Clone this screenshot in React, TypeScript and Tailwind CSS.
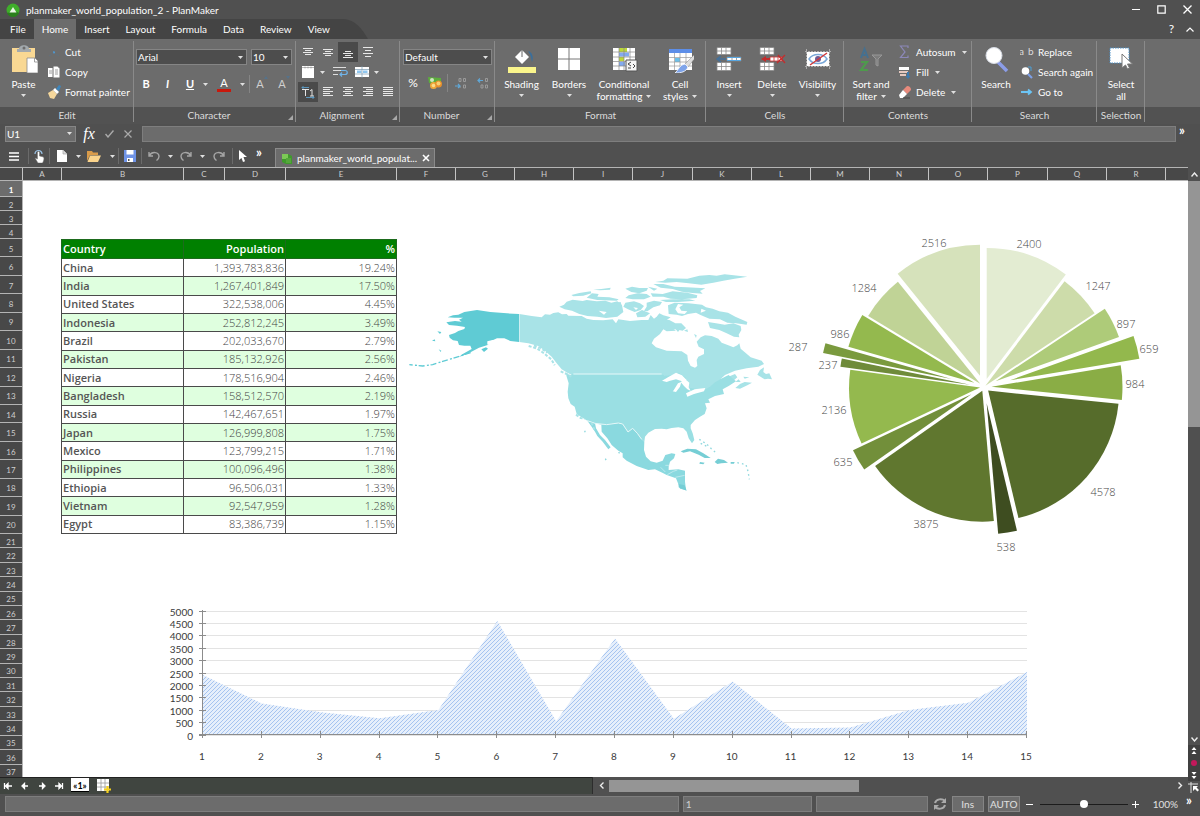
import React, { useState } from 'react';
import clsx from 'clsx';

const tabs = ['File', 'Home', 'Insert', 'Layout', 'Formula', 'Data', 'Review', 'View'];

const columns: { name: string; width: string }[] = [
  { name: 'A', width: 'w-[39px]' },
  { name: 'B', width: 'w-[122px]' },
  { name: 'C', width: 'w-[41px]' },
  { name: 'D', width: 'w-[61px]' },
  { name: 'E', width: 'w-[111px]' },
  ...'FGHI'.split('').map((name) => ({ name, width: 'w-[59px]' })),
  { name: 'J', width: 'w-[60px]' },
  ...'KLMNO'.split('').map((name) => ({ name, width: 'w-[59px]' })),
  { name: 'P', width: 'w-[60px]' },
  ...'QR'.split('').map((name) => ({ name, width: 'w-[59px]' })),
];

const countries = [
  ['China', '1,393,783,836', '19.24%'],
  ['India', '1,267,401,849', '17.50%'],
  ['United States', '322,538,006', '4.45%'],
  ['Indonesia', '252,812,245', '3.49%'],
  ['Brazil', '202,033,670', '2.79%'],
  ['Pakistan', '185,132,926', '2.56%'],
  ['Nigeria', '178,516,904', '2.46%'],
  ['Bangladesh', '158,512,570', '2.19%'],
  ['Russia', '142,467,651', '1.97%'],
  ['Japan', '126,999,808', '1.75%'],
  ['Mexico', '123,799,215', '1.71%'],
  ['Philippines', '100,096,496', '1.38%'],
  ['Ethiopia', '96,506,031', '1.33%'],
  ['Vietnam', '92,547,959', '1.28%'],
  ['Egypt', '83,386,739', '1.15%'],
];

// value, colour, how far the slice is pulled out, label position
const slices: [number, string, number, number, number][] = [
  [2400, '#e3ecd2', 8.5, 249, 23],
  [1247, '#cddcaa', 2, 318, 65],
  [897, '#aecb79', 13, 346, 103],
  [659, '#93b84d', 27, 369, 128],
  [984, '#8aad45', 7.5, 355, 163],
  [4578, '#566c2b', 5.5, 323, 271],
  [538, '#3e4d20', 16.5, 226, 326],
  [3875, '#60772f', 4, 146, 303],
  [635, '#728f3a', 14.5, 63, 241],
  [2136, '#94b94e', 4, 54, 189],
  [237, '#6f8b3a', 14, 48, 144],
  [287, '#7a9a3e', 33.5, 18, 126],
  [986, '#94b94e', 10.5, 60, 113],
  [1284, '#c0d396', 5, 84, 67],
  [2516, '#d6e2bb', 12, 154, 22],
];

const Caret = ({ className = '' }: { className?: string }) => (
  <svg className={clsx('shrink-0', className)} width="5" height="3" viewBox="0 0 5 3">
    <path d="M0 0h5L2.5 3z" fill="#e0e0e0" />
  </svg>
);

const Separator = () => <span className="h-4 w-px shrink-0 bg-[#6b6b6b]" />;

/* ---------- ribbon building blocks ---------- */

const Group: React.FC<{ label: string; width: string; launcher?: boolean; children: React.ReactNode }> = ({
  label,
  width,
  launcher,
  children,
}) => (
  <section className={clsx('relative flex shrink-0 flex-col', width)}>
    <div className="flex h-[68px] items-start">{children}</div>
    <h2 className={clsx('h-[17px] bg-[#525252] text-center leading-4 text-[#dcdcdc]', launcher && 'pr-3')}>{label}</h2>
    {launcher && (
      <svg className="absolute right-[3px] bottom-1" width="5" height="5" viewBox="0 0 5 5">
        <path d="M5 0v5H0z" fill="#a8a8a8" />
      </svg>
    )}
    <span className="absolute top-0.5 right-0 h-[81px] w-px bg-[#8a8a8a]" />
  </section>
);

const BigButton: React.FC<{
  lines: string[];
  width: string;
  caret?: 'below' | 'inline';
  children: React.ReactNode;
}> = ({ lines, width, caret, children }) => (
  <button type="button" className={clsx('flex shrink-0 flex-col items-center pt-1.5 leading-3 text-white', width)}>
    <svg width="28" height="28" viewBox="0 0 28 28" className="mb-[5px]">
      {children}
    </svg>
    {lines.map((line, i) => (
      <span key={line} className="flex items-center gap-1 whitespace-nowrap">
        {line}
        {caret === 'inline' && i === lines.length - 1 && <Caret />}
      </span>
    ))}
    {caret === 'below' && <Caret className="mt-1" />}
  </button>
);

const SmallButton: React.FC<{ label: string; caret?: boolean; children: React.ReactNode }> = ({
  label,
  caret,
  children,
}) => (
  <button type="button" className="flex h-5 items-center whitespace-nowrap text-white">
    <svg width="14" height="14" viewBox="0 0 14 14" className="mr-1">
      {children}
    </svg>
    {label}
    {caret && <Caret className="ml-1.5" />}
  </button>
);

const Tool: React.FC<{
  label: string;
  width?: string;
  pressed?: boolean;
  children: React.ReactNode;
}> = ({ label, width = 'w-5', pressed, children }) => (
  <button
    type="button"
    aria-label={label}
    className={clsx('flex h-5 shrink-0 items-center justify-center text-white', width, pressed && 'bg-[#4a4a4a]')}
  >
    {children}
  </button>
);

const Select: React.FC<{ label: string; value: string; width: string; className?: string }> = ({
  label,
  value,
  width,
  className = 'bg-[#4d4d4d]',
}) => (
  <span className={clsx('relative flex h-4 items-center', width)}>
    <select
      aria-label={label}
      className={clsx('h-4 w-full appearance-none border border-[#858585] pl-px leading-3 text-white', className)}
    >
      <option>{value}</option>
    </select>
    <Caret className="pointer-events-none absolute right-1" />
  </span>
);

const Lines = ({ d, color = '#e8e8e8' }: { d: string; color?: string }) => (
  <svg width="12" height="12" viewBox="0 0 12 12" stroke={color} fill="none">
    <path d={d} />
  </svg>
);

const Ribbon = () => (
  <div className="flex h-[85px] overflow-hidden bg-[#6c6c6c]">
    <Group label="Edit" width="w-[134px]">
      <BigButton lines={['Paste']} width="w-[47px]" caret="below">
        <path d="M2 3h23v24H2z" fill="#f9d893" />
        <path d="M9 4c0-5 10-5 10 0h2v3H7V4z" fill="#a3a9ad" />
        <circle cx="14" cy="3" r="1.500" fill="#6c6c6c" />
        <path d="M17 13h8l3 3v12H17z" fill="#fff" stroke="#8b8b8b" strokeWidth=".8" />
        <path d="M24.500 13v4H28" fill="none" stroke="#8b8b8b" strokeWidth=".8" />
      </BigButton>
      <div className="flex flex-col pt-[3px]">
        <SmallButton label="Cut">
          <path d="M6 7l2 .5M7 6.500v2" stroke="#4c9bd8" strokeWidth="1.200" />
          <path d="M2 11l3-2M12 11l-3-2" stroke="#61707c" />
        </SmallButton>
        <SmallButton label="Copy">
          <path d="M1 3h6v9H1z" fill="#fff" />
          <path d="M6 1h4.500L13 3.500V13H6z" fill="#fff" stroke="#6c6c6c" />
          <path d="M2 6h3M2 8h3M8 5h3M8 7h3M8 9h3" stroke="#888" strokeWidth=".8" />
        </SmallButton>
        <SmallButton label="Format painter">
          <path d="M1 8l5-3 4 4-3 5-4-1z" fill="#f5d79b" />
          <path d="M6 5l2-2 4 4-2 2z" fill="#fff" />
          <path d="M9 4l3-4 2 1-2 5z" fill="#3e86bd" />
        </SmallButton>
      </div>
    </Group>

    <Group label="Character" width="w-[162px]" launcher>
      <div className="flex flex-col gap-[9px] pt-2.5 pl-0.5">
        <div className="flex gap-1">
          <Select label="Font" value="Arial" width="w-[111px]" />
          <Select label="Font size" value="10" width="w-[41px]" />
        </div>
        <div className="flex items-center">
          <Tool label="Bold">
            <b className="text-[11px]">B</b>
          </Tool>
          <Tool label="Italic" width="w-[23px]">
            <b className="text-[11px] italic">I</b>
          </Tool>
          <Tool label="Underline" width="w-[22px]">
            <b className="text-[11px] underline">U</b>
          </Tool>
          <Tool label="Underline styles" width="w-2">
            <Caret />
          </Tool>
          <Tool label="Font color" width="w-[30px]">
            <span className="w-3.5 border-b-3 border-[#c8180c] text-[11px] leading-3">A</span>
          </Tool>
          <Tool label="More font colors" width="w-1.5">
            <Caret />
          </Tool>
          <span className="mx-1 h-[18px] w-px bg-[#858585]" />
          <Tool label="Grow font" width="w-4">
            <span className="text-[11px] text-[#d0d0d0]">A</span>
            <svg width="4" height="6" viewBox="0 0 4 6" className="self-start">
              <path d="M0 5l2-3 2 3z" fill="#55728a" />
            </svg>
          </Tool>
          <Tool label="Shrink font" width="w-7">
            <span className="text-[11px] text-[#d0d0d0]">A</span>
            <svg width="4" height="6" viewBox="0 0 4 6" className="self-start">
              <path d="M0 2l2 3 2-3z" fill="#55728a" />
            </svg>
          </Tool>
        </div>
      </div>
    </Group>

    <Group label="Alignment" width="w-[104px]" launcher>
      <div className="flex flex-col pt-[3px] pl-0.5">
        <div className="flex">
          <Tool label="Align top">
            <Lines d="M1 2.500h10M3 4.500h6M1 6.500h10M3 8.500h6" />
          </Tool>
          <Tool label="Align middle">
            <Lines d="M1 3.500h10M3 5.500h6M1 7.500h10M3 9.500h6" />
          </Tool>
          <Tool label="Align bottom" pressed>
            <Lines d="M3 5.500h6M1 7.500h10M3 9.500h6M1 11.500h10" />
          </Tool>
          <Tool label="Distribute vertically">
            <Lines d="M1 1.500h10M3 4.500h6M1 7.500h10M3 10.500h6" />
          </Tool>
        </div>
        <div className="flex">
          <Tool label="Cell borders">
            <svg width="14" height="12" viewBox="0 0 14 12">
              <path d="M1 0h12v12H1z" fill="#fff" />
              <path d="M1 1.500h12M4 .5v2M7 .5v2M10 .5v2" stroke="#888" strokeWidth=".6" />
            </svg>
          </Tool>
          <Tool label="More borders" width="w-2">
            <Caret />
          </Tool>
          <Tool label="Wrap text" width="w-7">
            <svg width="16" height="12" viewBox="0 0 16 12" fill="none">
              <path d="M1 1.500h13M1 4.500h8M1 8.500h5" stroke="#ddd" />
              <path d="M9 4.500h4c3 0 3 4 0 4H8m2-2l-2 2 2 2" stroke="#6fb4ea" strokeWidth="1.200" />
            </svg>
          </Tool>
          <Tool label="Merge cells" width="w-4">
            <svg width="14" height="12" viewBox="0 0 14 12" className="shrink-0">
              <path d="M0 1h14v10H0z" fill="#fff" />
              <path d="M2 4.500h4.500v2.500H2zM8 4.500h4.500v2.500H8z" fill="#8fc6ef" />
              <path d="M0 3.500h14M0 8h14M7 0v12" stroke="#7d9cb3" strokeWidth=".7" />
            </svg>
          </Tool>
          <Tool label="More merge options" width="w-3">
            <Caret />
          </Tool>
        </div>
        <div className="flex">
          <Tool label="General alignment" pressed>
            <svg width="14" height="13" viewBox="0 0 14 13" fill="none">
              <path d="M1 3.500h7M4.500 3.500V10M9 5l2-1.500V10M9 10h4" stroke="#e4e4e4" />
              <path d="M1 1.500h7M2.500 0L1 1.500 2.500 3M5 11.500h8M11.500 10l1.500 1.500-1.500 1.500" stroke="#5fa8d8" strokeWidth=".8" />
            </svg>
          </Tool>
          <Tool label="Align left">
            <Lines d="M1 1.500h10M1 3.500h7M1 5.500h10M1 7.500h7M1 9.500h10" />
          </Tool>
          <Tool label="Center">
            <Lines d="M1 1.500h10M3 3.500h6M1 5.500h10M3 7.500h6M1 9.500h10" />
          </Tool>
          <Tool label="Align right">
            <Lines d="M1 1.500h10M4 3.500h7M1 5.500h10M4 7.500h7M1 9.500h10" />
          </Tool>
          <Tool label="Justify">
            <Lines d="M1 1.500h10M1 3.500h10M1 5.500h10M1 7.500h10M1 9.500h10" />
          </Tool>
        </div>
      </div>
    </Group>

    <Group label="Number" width="w-[95px]" launcher>
      <div className="flex flex-col gap-2 pt-2.5 pl-[3px]">
        <Select label="Number format" value="Default" width="w-[89px]" />
        <div className="flex items-center">
          <Tool label="Percent">
            <span className="text-xs">%</span>
          </Tool>
          <Tool label="Currency" width="w-6">
            <svg width="16" height="14" viewBox="0 0 16 14">
              <path d="M1 1l13 1v6L2 7z" fill="#5cae3c" />
              <circle cx="5" cy="4" r="2" fill="#cfe8c0" />
              <circle cx="6.500" cy="9.500" r="3.500" fill="#f0a93a" />
              <circle cx="11.500" cy="8" r="3.500" fill="#e8902c" />
              <circle cx="11.500" cy="7.500" r="2" fill="#f8cf72" />
              <circle cx="6.500" cy="9.500" r="1.800" fill="#fbdc8c" />
            </svg>
          </Tool>
          <span className="h-[18px] w-px bg-[#858585]" />
          <Tool label="Fewer decimals" width="w-6">
            <svg width="13" height="13" viewBox="0 0 13 13" fill="none">
              <path d="M5 1.500h2v3H5zM9.500 1.500h2v3h-2zM9.500 8h2v3h-2zM6 11V9" stroke="#9a9a9a" />
              <path d="M1 9h5M4 7l2 2-2 2" stroke="#5fa8d8" strokeWidth="1.200" />
            </svg>
          </Tool>
          <Tool label="More decimals">
            <svg width="13" height="13" viewBox="0 0 13 13" fill="none">
              <path d="M9.500 1.500h2v3h-2zM5 8h2v3H5zM9.500 8h2v3h-2z" stroke="#9a9a9a" />
              <path d="M7 3.500H2M4 1.500l-2 2 2 2" stroke="#5fa8d8" strokeWidth="1.200" />
            </svg>
          </Tool>
        </div>
      </div>
    </Group>

    <Group label="Format" width="w-[211px]">
      <BigButton lines={['Shading']} width="w-[53px]" caret="below">
        <path d="M14 5l7 7-7 7-7-7z" fill="#fff" />
        <path d="M14 5v7" stroke="#666" />
        <path d="M20 6c4 1 6 6 4 11-1-4-1-7-4-11z" fill="#3a6f9c" />
        <path d="M0 22h28v6H0z" fill="#faf58c" />
      </BigButton>
      <BigButton lines={['Borders']} width="w-[42px]" caret="below">
        <path d="M3 3h22v22H3z" fill="#fff" />
        <path d="M14 3v22M3 14h22" stroke="#777" />
      </BigButton>
      <BigButton lines={['Conditional', 'formatting']} width="w-[68px]" caret="inline">
        <path d="M3 3h22v22H3z" fill="#fff" />
        <path d="M9 3h8v4H9zM9 12h5v4H9z" fill="#bcd838" />
        <path d="M9 7.500h10v4H9zM9 17h6v4H9z" fill="#82aaf0" />
        <path d="M3 7h22M3 12h22M3 16.500h22M3 21h22M9 3v22M14 3v22M20 3v22" stroke="#888" strokeWidth=".7" />
        <path d="M16 15h11v11H16z" fill="#f4f4f4" stroke="#555" />
        <path d="M21 17l-3 2 3 2M18 23h3M23 19l2 2-2 2" fill="none" stroke="#444" />
      </BigButton>
      <BigButton lines={['Cell', 'styles']} width="w-[44px]" caret="inline">
        <path d="M3 4h23v21H3z" fill="#fff" />
        <path d="M3 4h23v4H3z" fill="#5d8ee8" />
        <path d="M9 13h5v4H9z" fill="#6cc0ea" />
        <path d="M3 12.500h23M3 17h23M3 21h23M8.500 8v17M14 8v17M20 8v17" stroke="#999" strokeWidth=".7" />
        <path d="M28 10l1 3-7 9-3-3z" fill="#ddd" stroke="#888" strokeWidth=".5" />
        <path d="M19 19l3 3c-2 5-7 6-13 6 3-2 4-8 10-9z" fill="#7ea4ea" stroke="#fff" strokeWidth=".8" />
      </BigButton>
    </Group>

    <Group label="Cells" width="w-[138px]">
      <BigButton lines={['Insert']} width="w-[46px]" caret="below">
        <g fill="#fff" stroke="#8a8a8a" strokeWidth=".8">
          <path d="M2 2.500h14v7H2zM2 6h14M6.500 2.500v7M11 2.500v7" />
          <path d="M2 17.500h14v8H2zM2 21.500h14M6.500 17.500v8M11 17.500v8" />
          <path d="M12 12h14v4H12zM17 12v4M21.500 12v4" />
        </g>
        <path d="M2 14h9M6 11l-4 3 4 3" fill="none" stroke="#44709a" strokeWidth="1.500" />
        <path d="M12 12.500h14M12 15.500h14" stroke="#58a6e0" />
      </BigButton>
      <BigButton lines={['Delete']} width="w-10" caret="below">
        <g fill="#fff" stroke="#8a8a8a" strokeWidth=".8">
          <path d="M2 2.500h14v7H2zM2 6h14M6.500 2.500v7M11 2.500v7" />
          <path d="M2 17.500h14v8H2zM2 21.500h14M6.500 17.500v8M11 17.500v8" />
          <path d="M12 12h12v4H12zM16 12v4M20 12v4" stroke="#d03030" />
        </g>
        <path d="M3 14l5-3v2h4v2H8v2z" fill="#c42c2c" />
        <path d="M20 10l7 8M27 10l-8 8" stroke="#c42c2c" strokeWidth="1.300" />
      </BigButton>
      <BigButton lines={['Visibility']} width="w-[51px]" caret="below">
        <path d="M3 7h22v14H3z" fill="#fff" />
        <path d="M1 6.500h26M1 21.500h26M2.500 4v20M25.500 4v20" stroke="#aaa" strokeDasharray="2 1" />
        <path d="M5 14c4-6 14-6 18 0-4 6-14 6-18 0z" fill="#fff" stroke="#7aa8d8" strokeWidth="1.500" />
        <circle cx="14" cy="14" r="3" fill="#6f5c96" />
        <path d="M6 20L23 8" stroke="#d23a3a" strokeWidth="1.500" />
      </BigButton>
    </Group>

    <Group label="Contents" width="w-[128px]">
      <BigButton lines={['Sort and', 'filter']} width="w-[54px]" caret="inline">
        <path d="M4 13L7.500 4l3.500 9M5.500 10h4" fill="none" stroke="#46708f" strokeWidth="2" />
        <path d="M4 17h6l-6 8h7" fill="none" stroke="#4e9a4c" strokeWidth="2.200" />
        <path d="M15 10h10l-4 4v7l-2-1v-6z" fill="#7c7c7c" stroke="#989898" />
      </BigButton>
      <div className="flex flex-col pt-[3px]">
        <SmallButton label="Autosum" caret>
          <path d="M10 3V1H2.500L7 7l-4.500 5.500H10v-2" fill="none" stroke="#8c88b8" strokeWidth="1.200" />
        </SmallButton>
        <SmallButton label="Fill" caret>
          <path d="M1 2h10v3H1z" fill="#fff" />
          <path d="M1 6h9v2H1zM2 9h6v2H2z" fill="#e5c9c0" />
          <path d="M9 7h2v4h1.500L10 14l-2.500-3H9z" fill="#3c7ab0" />
        </SmallButton>
        <SmallButton label="Delete" caret>
          <path d="M5 5l4-4c3 0 4 2 4 4L9 9z" fill="#e88a7c" />
          <path d="M1 10l4-5 4 4-4 4H2z" fill="#fff" />
          <path d="M5 13h7" stroke="#444" />
        </SmallButton>
      </div>
    </Group>

    <Group label="Search" width="w-[125px]">
      <BigButton lines={['Search']} width="w-[48px]">
        <path d="M16 17l9 9" stroke="#8b9de8" strokeWidth="3.500" />
        <circle cx="12" cy="10.500" r="8" fill="#fff" stroke="#d8dde6" />
      </BigButton>
      <div className="flex flex-col pt-[3px]">
        <SmallButton label="Replace">
          <text x="-1" y="10" fontSize="10" fill="#ddd">a</text>
          <text x="8" y="10" fontSize="10" fill="#ddd">b</text>
        </SmallButton>
        <SmallButton label="Search again">
          <circle cx="5.500" cy="6" r="3.800" fill="#fff" />
          <path d="M8 9l4 4" stroke="#7ea0e8" strokeWidth="2.200" />
          <path d="M8 2h3v4" fill="none" stroke="#4aa0d8" />
        </SmallButton>
        <SmallButton label="Go to">
          <path d="M1 7h10M8 4.500L11 7 8 9.500" fill="none" stroke="#6cc4f4" strokeWidth="1.800" />
        </SmallButton>
      </div>
    </Group>

    <Group label="Selection" width="w-[48px]">
      <BigButton lines={['Select', 'all']} width="w-[48px]">
        <path d="M3 3h19v15H3z" fill="#fff" stroke="#4a90c8" strokeDasharray="1.500 1" />
        <path d="M15 9v14l3.500-3 2 4 2-1-2-4h5z" fill="#fff" stroke="#777" />
      </BigButton>
    </Group>
    <div className="flex flex-1 flex-col">
      <div className="h-[68px]" />
      <div className="h-[17px] bg-[#525252]" />
    </div>
  </div>
);

/* ---------- window chrome above the sheet ---------- */

const TitleBar = () => (
  <header className="flex h-[19px] items-center justify-between pr-2 pl-1.5">
    <div className="flex items-center gap-1.5">
      <svg width="14" height="14" viewBox="0 0 14 14">
        <circle cx="7" cy="7" r="6.500" fill="#3fae2a" />
        <path d="M1 10a6.500 6.500 0 0 0 12 0L9 8z" fill="#2a7f1c" />
        <path d="M3.500 9.500L7 4l3.500 5.500z" fill="#e9f6e4" />
      </svg>
      <h1 className="text-white">planmaker_world_population_2 - PlanMaker</h1>
    </div>
    <div className="flex items-center gap-[17px]">
      <button type="button" aria-label="Minimize">
        <svg width="8" height="9" viewBox="0 0 8 9">
          <path d="M0 4.500h8" stroke="#fff" />
        </svg>
      </button>
      <button type="button" aria-label="Maximize">
        <svg width="9" height="9" viewBox="0 0 9 9">
          <path d="M.8.8h7.400v7.400H.8z" fill="none" stroke="#fff" strokeWidth="1.200" />
        </svg>
      </button>
      <button type="button" aria-label="Close">
        <svg width="9" height="9" viewBox="0 0 9 9">
          <path d="M.5.5l8 8M8.500.5l-8 8" stroke="#fff" strokeWidth="1.300" />
        </svg>
      </button>
    </div>
  </header>
);

const MenuTabs = () => {
  const [active, setActive] = useState('Home');
  return (
    <nav className="flex h-5 items-stretch justify-between">
      <div className="flex">
        <div className="flex bg-[#444444]">
          {tabs.map((tab) => (
            <button
              key={tab}
              type="button"
              onClick={() => setActive(tab)}
              className={clsx('px-2 text-white first:pl-2.5', active === tab && 'bg-[#6c6c6c]')}
            >
              {tab}
            </button>
          ))}
        </div>
        <svg width="32" height="20" viewBox="0 0 32 20">
          <path d="M0 0h6c12 1 18 10 24 20H0z" fill="#444" />
        </svg>
      </div>
      <div className="flex items-center gap-3 pr-1.5">
        <button type="button" className="text-xs text-white">
          ?
        </button>
        <button type="button" aria-label="Collapse ribbon">
          <svg width="8" height="5" viewBox="0 0 8 5">
            <path d="M.5 4.500L4 1l3.500 3.500" fill="none" stroke="#fff" strokeWidth="1.200" />
          </svg>
        </button>
      </div>
    </nav>
  );
};

const FormulaBar = () => (
  <div className="flex h-[19px] items-center pl-[5px]">
    <Select label="Cell address" value="U1" width="w-[71px]" className="bg-[#6c6c6c]" />
    <button type="button" aria-label="Insert function" className="w-[26px] font-['Liberation_Serif',serif] text-base leading-4 text-white italic">
      fx
    </button>
    <button type="button" aria-label="Accept" className="flex w-3.5 justify-center">
      <svg width="9" height="8" viewBox="0 0 9 8">
        <path d="M.5 4L3 7l5.500-6.500" fill="none" stroke="#aaa" strokeWidth="1.400" />
      </svg>
    </button>
    <button type="button" aria-label="Cancel" className="mr-2.5 ml-2 flex w-2 justify-center">
      <svg width="8" height="8" viewBox="0 0 8 8">
        <path d="M.5.5l7 7M7.500.5l-7 7" stroke="#aaa" strokeWidth="1.200" />
      </svg>
    </button>
    <input aria-label="Formula" className="h-4 min-w-0 flex-1 border border-[#7e7e7e] bg-[#6c6c6c] text-white" />
    <button type="button" className="w-6 self-start pr-3 text-center text-[13px] leading-3 font-bold text-white">
      »
    </button>
  </div>
);

const QuickBar = () => (
  <div className="flex h-6 items-end">
    <div className="flex items-center pb-px">
      <Tool label="Menu" width="w-7">
        <svg width="10" height="9" viewBox="0 0 10 9">
          <path d="M0 1h10M0 4.500h10M0 8h10" stroke="#fff" strokeWidth="1.600" />
        </svg>
      </Tool>
      <Separator />
      <Tool label="Touch mode">
        <svg width="12" height="14" viewBox="0 0 12 14">
          <path d="M2 5a3.500 3.500 0 1 1 7 0" fill="none" stroke="#9cc4e8" strokeWidth="1.200" />
          <path d="M4.500 3.500c0-1.500 2-1.500 2 0V7l4 1c1 2 0 4-1 6H5L2 9l2.500 1z" fill="#fff" stroke="#777" strokeWidth=".5" />
        </svg>
      </Tool>
      <Separator />
      <Tool label="New" width="w-6">
        <svg width="10" height="12" viewBox="0 0 10 12">
          <path d="M0 0h6l4 4v8H0z" fill="#fff" />
          <path d="M6 0v4h4" fill="#ddd" stroke="#999" strokeWidth=".6" />
        </svg>
      </Tool>
      <Tool label="New from template" width="w-2">
        <Caret />
      </Tool>
      <Tool label="Open" width="w-6">
        <svg width="14" height="11" viewBox="0 0 14 11">
          <path d="M0 0h5l1 1.500h5V4H3L0 10z" fill="#d99b4a" />
          <path d="M3 4.500h11L11 11H.5z" fill="#fbd48c" />
        </svg>
      </Tool>
      <Tool label="Recent files" width="w-3">
        <Caret />
      </Tool>
      <Separator />
      <Tool label="Save" width="w-[22px]">
        <svg width="12" height="12" viewBox="0 0 12 12">
          <path d="M0 0h12v12H0z" fill="#6f93e6" />
          <path d="M2.500 0h7v4.500h-7zM3 8h6v4H3z" fill="#fff" />
          <path d="M4 9h1.500v2H4z" fill="#555" />
        </svg>
      </Tool>
      <Separator />
      <Tool label="Undo" width="w-6">
        <svg width="12" height="10" viewBox="0 0 12 10" fill="none" stroke="#a5a5a5" strokeWidth="1.400">
          <path d="M1 1v4h4M1.500 4.500C4 0 11 1 11 5.500c0 2-1 3-2.500 4" />
        </svg>
      </Tool>
      <Tool label="Undo history" width="w-2">
        <Caret />
      </Tool>
      <Tool label="Redo" width="w-6">
        <svg width="12" height="10" viewBox="0 0 12 10" fill="none" stroke="#a5a5a5" strokeWidth="1.400">
          <path d="M11 1v4H7M10.500 4.500C8 0 1 1 1 5.500c0 2 1 3 2.500 4" />
        </svg>
      </Tool>
      <Tool label="Redo history" width="w-2">
        <Caret />
      </Tool>
      <Tool label="Repeat" width="w-[26px]">
        <svg width="12" height="10" viewBox="0 0 12 10" fill="none" stroke="#a5a5a5" strokeWidth="1.400">
          <path d="M11 1v4H7M10.500 4.500C8 0 1 1 1 5.500c0 2 1 3 2.500 4" />
        </svg>
      </Tool>
      <Separator />
      <Tool label="Object mode">
        <svg width="8" height="12" viewBox="0 0 8 12">
          <path d="M0 0v10l2.500-2 1.500 4 2-.8L4.500 7H8z" fill="#fff" />
        </svg>
      </Tool>
      <Tool label="More tools" width="w-3">
        <span className="self-start text-[13px] leading-3 font-bold">»</span>
      </Tool>
    </div>
    <div className="ml-2.5 flex h-[19px] w-40 items-center gap-[5px] border border-b-0 border-[#8a8a8a] bg-[#6c6c6c] px-1.5 text-white">
      <svg width="10" height="11" viewBox="0 0 10 11" className="shrink-0">
        <path d="M0 1h6l4 2v8H4L0 9z" fill="#3f9a2c" />
        <path d="M0 1h6v5H0z" fill="#7cc956" />
        <path d="M4 5h5v5H4z" fill="#55a63c" />
      </svg>
      <span className="flex-1 whitespace-nowrap">planmaker_world_populat...</span>
      <button type="button" aria-label="Close document">
        <svg width="8" height="8" viewBox="0 0 8 8">
          <path d="M1 1l6 6M7 1L1 7" stroke="#fff" strokeWidth="1.600" />
        </svg>
      </button>
    </div>
  </div>
);

/* ---------- sheet contents ---------- */

const PopulationTable = () => (
  <table className="mt-[58px] h-[295px] w-[335px] shrink-0 table-fixed border-collapse text-[11px] leading-[14px]">
    <colgroup>
      <col className="w-[122px]" />
      <col className="w-[102px]" />
      <col className="w-[111px]" />
    </colgroup>
    <thead>
      <tr className="h-[19px] bg-[#008000] text-white">
        <th className="border border-[#1d6b1d] px-px py-0 text-left font-semibold">Country</th>
        <th className="border border-[#1d6b1d] px-px py-0 text-right font-semibold">Population</th>
        <th className="border border-[#1d6b1d] px-px py-0 text-right font-semibold">%</th>
      </tr>
    </thead>
    <tbody>
      {countries.map(([name, population, share], i) => (
        <tr key={name} className={i % 2 ? 'bg-[#dfffdf]' : 'bg-white'}>
          <td className="border border-[#4a4a4a] px-px py-0 font-semibold text-[#555555]">{name}</td>
          <td className="border border-[#4a4a4a] px-px py-0 text-right font-light text-[#444444]">{population}</td>
          <td className="border border-[#4a4a4a] px-px py-0 text-right font-light text-[#444444]">{share}</td>
        </tr>
      ))}
    </tbody>
  </table>
);

const NorthAmerica = () => (
  <svg className="mt-[79px] shrink-0" width="380" height="240" viewBox="0 0 1140 720">
    {/* Canada */}
    <path
      fill="#a8e3e7"
      d="M358 162L395 168 425 172 435 163 450 164 460 159 475 157 486 163 500 162 505 167 545 168 560 176 580 180 610 181 638 178 648 190 655 178 690 183 725 180 745 180 752 165 762 176 770 170 778 160 790 166 812 172 800 180 788 186 800 196 815 204 828 212 800 214 790 208 780 222 762 236 755 250 768 262 800 272 845 274 862 285 864 302 872 318 885 323 892 318 890 300 895 290 912 282 912 268 896 260 890 245 902 232 915 226 935 228 955 236 965 248 985 256 1000 262 1012 256 1018 250 1022 266 1038 280 1052 292 1085 302 1092 312 1075 320 1040 325 1005 332 975 345 962 357 985 350 1005 342 1012 352 1000 362 970 376 945 388 920 396 870 408 850 372 790 345 516 345 502 338 485 328 470 310 455 290 435 272 415 258 385 250 358 246z"
    />
    <g fill="#a8e3e7">
      <path d="M500 125l18-6 30 4 12-3 30 4 26-2 18 6 18-4 14 12 4 20-18 14-34 4-26-4-30-2-24-6-22-10-22-4-16-8 14-6z" />
      <path d="M514 105l24-6 34-5 2 6-24 7-30 2zM580 89l24-2 28-4-2 6-30 2zM576 100l20 2-4 8 36 2 28 6-6 4-58-2-32-7z" />
      <path d="M644 128l18-2 4 14-10 10zM676 128l26-4 18 6 12 8-10 12-18 6-20-8-14-8z" />
      <path d="M676 86l20-6 22 4 26 0-4 8-22 8-24-4zM686 106l26-6 28 2 12 8-20 8-34 0-22-4zM740 128l22-6 24 4-6 10-20 6-18 12-10-2 8-12zM708 160l18-10 24 10-14 10-24 2z" />
      <path d="M766 66l24-4 12-7 60 1 36-9 30-2 22 2 24-4 68 7-38 6-34 6-30 6-36 6-38-4-36-4-34 2z" />
      <path d="M760 72l30 0 34 8 36 2 56 3-16 8 8 8-30-2-32-4-28-8-36-4zM744 80l28 6-10 6zM752 100l36 2 30-8 44 4 30 8-2 8-44 4-34-2-22-6-32 0zM780 120l40-2 48 0 18 4-52 4-36 0z" />
      <path d="M804 136l20-8 42 2 40 4 12 8 20 4 20 8 26 4 22 12 36 16-2 8-32-4-26-2-22-10-32-2-28-12-12-6-24 4-18 6-16-4-24-2z" />
      <path d="M924 186l24 4 26 4 26-4 22 8 2 12-8 14 2 8-16-2-22-10-22-10-28-6zM790 178l18 2 18 10 18 0 14 14-10 8-22-4-14 4-14-12-16-6z" />
      <path d="M826 206l14 2-6 8zM852 212l10-4 2 8zM882 222l8 4-2 8z" />
      <path d="M1072 344l8-14 12-8-2 14 8 6 10-2 8 18-12-2-10 2-10-6zM1006 384l14-12 14-6 22 2-14 8-22 10zM1006 366l10-8 6 8zM1030 350l18 2-14 4z" />
    </g>
    {/* Lower 48 */}
    <path
      fill="#9adfe3"
      d="M516 343H782L800 347 818 345 836 338 856 352 868 384 912 390 930 380 945 367 975 350 986 345 996 354 1008 364 986 378 968 388 972 402 945 408 925 418 930 428 915 430 920 445 914 462 900 470 885 480 872 495 872 505 878 520 883 540 876 550 866 535 860 515 850 505 835 502 815 504 800 508 785 506 765 507 745 518 735 530 733 545 725 538 712 520 698 505 684 516 668 492 655 489 620 494 604 494 585 490 562 482 545 472 530 462 524 440 512 432 505 415 503 395 506 370 500 350 498 340 512 346z"
    />
    {/* Great Lakes and gulfs */}
    <g fill="#fff">
      <path d="M786 362l18-10 24-14 18 8 14 14-14 4-18-6-18 4-10 4zM820 392l14-22 10-4-4 14-12 16-10-2zM842 366l14-8 12 10-2 14 6 10-10-4-10-10zM858 400l26-12 32-4-4 10-30 8-20 8zM886 200l6 0-2 8z" />
      <path d="M834 132l16 2-12 8 6 10 18 2-8 8-20-2-8-12zM904 146l14 6-16 6zM596 152l24 4-8 8zM700 142l14 2-6 6z" />
    </g>
    {/* Mexico and Central America */}
    <path
      fill="#8ad9df"
      d="M562 482L585 490 588 505 600 525 615 540 632 562 625 568 608 545 592 528 585 515 575 500zM604 494L655 489 668 492 684 516 698 505 712 520 725 538 733 545 732 570 738 590 752 604 770 608 788 602 796 585 815 580 826 582 822 595 810 605 806 620 806 630 835 628 855 632 855 665 858 690 840 686 834 670 828 655 800 645 790 640 765 628 745 630 710 618 680 602 668 592 668 580 655 572 635 555 622 535 605 515z"
    />
    <path fill="none" stroke="#e4f7f8" strokeWidth="3" d="M520 342H785M562 482L585 490 620 494 655 489 668 492 684 516 698 505 712 520 725 538" />
    <path fill="none" stroke="#d4f2f4" strokeWidth="2" d="M782 622l14 14M796 616l12 0M802 644l18-10 12-4M826 652l28-6M358 162v84" />
    <g fill="#76ced5">
      <path d="M842 574l20-8 26 2 22 12 22 14-18 0-18-10-26-10-20 4zM900 606l14 2-4 5-12-2zM944 606l10-10 18 4 12 8-20 2-12 2zM992 606l12 0-2 5-10 0zM836 672l18 4 6 16-12-4-12-6z" />
    </g>
    <path fill="none" stroke="#8fd8de" strokeWidth="4" strokeDasharray="5 9" d="M898 538l22 14 14 14 18 16M902 550l20 10M1012 608l26 6 6 20 4 24M554 512l2 6M616 596l4 8M656 576l6 10" />
    <path fill="none" stroke="#a8e3e7" strokeWidth="6" strokeDasharray="9 5" d="M386 258l26 8 20 14 22 18 10 18M402 256l20 8 20 14M482 334l18 8 14 8M528 464l14 10 12 2M574 488l10 22" />
    {/* Alaska */}
    <path
      fill="#5fcbd4"
      d="M143 172l16-6 16-2 18-8 38-6 40 6 50 4 36 2v84l-26-3-18-8-22 0-18 8-10 12-26 8-34 18-26 10 10-8 28-16-4-10-18 0-16-2-4-12-14-2-10-8-2-8 18-6 10-6 18-6 2-6-24-4-24-2-8-8 26-4 20 2-8-6 12-6-26 0z"
    />
    <path fill="#5fcbd4" d="M244 268l14-6 6 4-12 10zM112 214l12 2-4 6zM96 242l8-4 2 6zM116 268l8 4-2 4z" />
    <path fill="#fff" d="M262 244l16-4 8 2-12 8-12 4z" />
    <path fill="none" stroke="#5fcbd4" strokeWidth="4" strokeDasharray="18 5 6 7" d="M212 278l-44 14-40 12-30 10-30 4-40-4" />
  </svg>
);

const PieChart = () => {
  const total = slices.reduce((sum, [value]) => sum + value, 0);
  const cx = 204;
  const cy = 162;
  const r = 131;
  let start = 0;
  return (
    <svg className="mt-11 shrink-0" width="390" height="335" viewBox="0 0 390 335">
      {slices.map(([value, color, offset, lx, ly]) => {
        const end = start + (value / total) * 2 * Math.PI;
        const mid = (start + end) / 2;
        const x = cx + offset * Math.sin(mid);
        const y = cy - offset * Math.cos(mid);
        const d = `M${x} ${y}L${x + r * Math.sin(start)} ${y - r * Math.cos(start)}A${r} ${r} 0 0 1 ${
          x + r * Math.sin(end)
        } ${y - r * Math.cos(end)}Z`;
        start = end;
        return (
          <g key={value}>
            <path d={d} fill={color} />
            <text x={lx} y={ly} textAnchor="middle" fontSize="11" fontWeight="300" fill="#484848">
              {value}
            </text>
          </g>
        );
      })}
    </svg>
  );
};

const AreaChart = () => {
  const x = (i: number) => 44 + (i * 824) / 14;
  const y = (value: number) => 134.5 - (value * 124) / 5000;
  const line = slices.map(([value], i) => `${x(i)},${y(value)}`).join(' ');
  const steps = Array.from({ length: 11 }, (_, i) => i * 500);
  return (
    <svg className="mt-10 ml-[136px] font-[Lato,sans-serif]" width="880" height="170" viewBox="0 0 880 170" fontSize="10" fill="#3a3a3a">
      <defs>
        <pattern id="hatch" width="4" height="4" patternUnits="userSpaceOnUse">
          <path d="M0 0h4v4H0z" fill="#e6effb" />
          <path d="M-1 1l2-2M0 4l4-4M3 5l2-2" stroke="#9fc0ee" strokeWidth=".9" />
        </pattern>
      </defs>
      {steps.map((value) => (
        <g key={value}>
          <path d={`M44 ${Math.round(y(value)) + 0.5}h824`} stroke="#e3e3e3" />
          <text x="34" y={y(value) + 5} textAnchor="end">
            {value}
          </text>
        </g>
      ))}
      <polygon points={`44,134.5 ${line} 868,134.5`} fill="url(#hatch)" />
      <path d="M43.500 10v128M40 134.500h828" stroke="#8c8c8c" fill="none" />
      {steps.map((value) => (
        <path key={value} d={`M40 ${Math.round(y(value)) + 0.5}h7`} stroke="#8c8c8c" />
      ))}
      {slices.map(([value], i) => (
        <g key={value}>
          <path d={`M${Math.round(x(i)) - 0.5} 131v7`} stroke="#8c8c8c" />
          <text x={x(i) - 1} y="160" textAnchor="middle">
            {i + 1}
          </text>
        </g>
      ))}
    </svg>
  );
};

const RowHeader = ({ row, className }: { row: number; className: string }) => (
  <div
    className={clsx(
      'flex min-h-0 items-center justify-center border-b border-[#b4b4b4] pt-0.5',
      row === 1 ? 'bg-[#6c6c6c] font-bold text-white' : 'text-[#cfcfcf]',
      className,
    )}
  >
    {row}
  </div>
);

const rowRange = (from: number, to: number) => Array.from({ length: to - from + 1 }, (_, i) => from + i);

const Sheet = () => (
  <div className="flex min-h-0 flex-1">
    <div className="flex min-w-0 flex-1 flex-col">
      <div className="flex h-3.5 shrink-0 overflow-hidden border-y border-[#b4b4b4] bg-[#484848] text-[8px] leading-3 text-[#cfcfcf]">
        <span className="w-[23px] shrink-0 border-r border-[#c4c4c4]" />
        {columns.map(({ name, width }) => (
          <span key={name} className={clsx('shrink-0 border-r border-[#c4c4c4] text-center', width)}>
            {name}
          </span>
        ))}
      </div>
      <div className="flex min-h-0 flex-1 overflow-hidden">
        <div className="h-0 w-[23px] shrink-0 text-[8px] leading-3">
          <div className="border-r border-[#b4b4b4] bg-[#484848]">
            <RowHeader row={1} className="h-4" />
            {[2, 3, 4].map((row) => (
              <RowHeader key={row} row={row} className="h-3.5" />
            ))}
            <div className="flex h-[295px] flex-col">
              {rowRange(5, 20).map((row) => (
                <RowHeader key={row} row={row} className="flex-1" />
              ))}
            </div>
            <div className="flex h-[245px] flex-col">
              {rowRange(21, 37).map((row) => (
                <RowHeader key={row} row={row} className="flex-1" />
              ))}
            </div>
          </div>
        </div>
        <main className="min-w-0 flex-1 overflow-hidden bg-white font-['Open_Sans',sans-serif]">
          <div className="flex items-start pl-[38px]">
            <PopulationTable />
            <div className="w-[3px] shrink-0" />
            <NorthAmerica />
            <PieChart />
          </div>
          <AreaChart />
        </main>
      </div>
    </div>
    <div className="relative z-10 -mb-1 flex w-3 shrink-0 flex-col items-center bg-[#505050]">
      <button type="button" aria-label="Scroll up" className="flex h-3.5 items-center">
        <svg width="7" height="5" viewBox="0 0 7 5">
          <path d="M.5 4.500l3-3.500 3 3.500" fill="none" stroke="#eee" strokeWidth="1.400" />
        </svg>
      </button>
      <div className="h-[246px] w-full bg-[#959595]" />
      <div className="flex-1" />
      <button type="button" aria-label="Scroll down" className="flex h-3 items-center">
        <svg width="7" height="5" viewBox="0 0 7 5">
          <path d="M.5.500l3 3.500 3-3.500" fill="none" stroke="#eee" strokeWidth="1.400" />
        </svg>
      </button>
      <button type="button" aria-label="Previous object" className="flex h-3 w-full items-center justify-center bg-[#404040]">
        <svg width="6" height="8" viewBox="0 0 6 8">
          <path d="M3 0l2.500 3h-5zM3 4l2.500 3h-5z" fill="#fff" />
        </svg>
      </button>
      <button type="button" aria-label="Select object" className="flex h-3 w-full items-center justify-center bg-[#404040]">
        <span className="size-1.5 rounded-full bg-[#c2185b]" />
      </button>
      <button type="button" aria-label="Next object" className="flex h-3 w-full items-center justify-center bg-[#404040]">
        <svg width="6" height="8" viewBox="0 0 6 8">
          <path d="M3 4L.5 1h5zM3 8L.5 5h5z" fill="#fff" />
        </svg>
      </button>
    </div>
  </div>
);

const SheetTabs = () => (
  <div className="flex h-[17px] shrink-0 items-stretch bg-[#505050]">
    <div className="flex min-w-0 flex-1 border-t border-[#222] bg-[#404540]">
      {[
        ['First sheet', 'M1.500 1v6M9 4H4M5 1.500L2.500 4 5 6.500z'],
        ['Previous sheet', 'M8 4H3M4.500 1.500L2 4l2.500 2.500z'],
        ['Next sheet', 'M2 4h5M5.500 1.500L8 4 5.500 6.500z'],
        ['Last sheet', 'M8.500 1v6M1 4h5M5 1.500L7.500 4 5 6.500z'],
      ].map(([label, d]) => (
        <Tool key={label} label={label} width="w-[17px]">
          <svg width="10" height="8" viewBox="0 0 10 8" className="mr-0.5 mb-1">
            <path d={d} fill="#fff" stroke="#fff" strokeWidth="1.300" />
          </svg>
        </Tool>
      ))}
      <button type="button" className="ml-[3px] h-3.5 w-[18px] border-b border-black bg-white text-center text-[9px] leading-4 font-bold text-black">
        «1»
      </button>
      <button type="button" aria-label="Add sheet" className="ml-2">
        <svg width="14" height="14" viewBox="0 0 14 14">
          <path d="M0 0h12v12H0z" fill="#fff" />
          <path d="M0 4h12M0 8h12M4 0v12M8 0v12" stroke="#999" strokeWidth=".8" />
          <path d="M10.500 7v7M7 10.500h7" stroke="#f4cf1c" strokeWidth="2.200" />
        </svg>
      </button>
    </div>
    <div className="flex w-[608px] items-center border-l border-[#2c2c2c]">
      <button type="button" aria-label="Scroll left" className="flex w-4 justify-center">
        <svg width="5" height="7" viewBox="0 0 5 7">
          <path d="M4.500.5l-3 3 3 3" fill="none" stroke="#eee" strokeWidth="1.400" />
        </svg>
      </button>
      <div className="h-3 w-[250px] bg-[#959595]" />
      <div className="flex-1" />
      <button type="button" aria-label="Scroll right" className="flex w-4 justify-center">
        <svg width="5" height="7" viewBox="0 0 5 7">
          <path d="M.5.5l3 3-3 3" fill="none" stroke="#eee" strokeWidth="1.400" />
        </svg>
      </button>
      <svg width="12" height="12" viewBox="0 0 12 12" className="self-end">
        <path d="M0 2h10M3 0v11" stroke="#ddd" />
        <path d="M5 4h5l-1.500 1.500L11 8l-1.500 1.500L7 7 5 9z" fill="#fff" />
      </svg>
    </div>
  </div>
);

const StatusBar = () => {
  const [zoom, setZoom] = useState(100);
  return (
    <footer className="flex h-[22px] shrink-0 items-center gap-1 pb-0.5 pl-[5px] text-[#e0e0e0]">
      <output className="h-4 flex-1 border border-[#7e7e7e] bg-[#6c6c6c]" />
      <output className="h-4 w-[129px] border border-[#7e7e7e] bg-[#6c6c6c] px-0.5 leading-[14px] text-[#cfcfcf]">1</output>
      <output className="h-4 w-28 border border-[#7e7e7e] bg-[#6c6c6c]" />
      <button type="button" aria-label="Refresh" className="mx-px">
        <svg width="14" height="14" viewBox="0 0 14 14" fill="none" stroke="#aaa" strokeWidth="2">
          <path d="M2 6c1-4 7-5 10-2M12 8c-1 4-7 5-10 2" />
          <path d="M13 1v5H8zM1 13V8h5z" fill="#aaa" stroke="none" />
        </svg>
      </button>
      <button type="button" className="h-4 w-8 border border-[#858585] bg-[#6c6c6c] leading-[14px]">
        Ins
      </button>
      <button type="button" className="h-4 w-8 border border-[#858585] bg-[#6c6c6c] leading-[14px]">
        AUTO
      </button>
      <button type="button" aria-label="Zoom out" className="flex w-3 justify-center">
        <svg width="7" height="7" viewBox="0 0 7 7">
          <path d="M0 3.500h7" stroke="#fff" />
        </svg>
      </button>
      <input
        type="range"
        aria-label="Zoom"
        min={0}
        max={200}
        value={zoom}
        onChange={(e) => setZoom(Number(e.target.value))}
        className="h-2.5 w-[88px] appearance-none bg-[linear-gradient(#1c1c1c,#1c1c1c)] bg-[length:100%_1px] bg-center bg-no-repeat [&::-webkit-slider-thumb]:size-2 [&::-webkit-slider-thumb]:appearance-none [&::-webkit-slider-thumb]:rounded-full [&::-webkit-slider-thumb]:bg-white"
      />
      <button type="button" aria-label="Zoom in">
        <svg width="7" height="7" viewBox="0 0 7 7">
          <path d="M0 3.500h7M3.500 0v7" stroke="#fff" />
        </svg>
      </button>
      <span className="mr-1 ml-2.5">{zoom}%</span>
      <button type="button" className="mr-2 self-start text-[13px] leading-3 font-bold text-white">
        »
      </button>
    </footer>
  );
};

export default function App() {
  return (
    <div className="flex h-screen flex-col overflow-hidden bg-[#505050] font-[Lato,sans-serif] text-[10px] leading-3">
      <TitleBar />
      <MenuTabs />
      <Ribbon />
      <FormulaBar />
      <QuickBar />
      <Sheet />
      <SheetTabs />
      <StatusBar />
    </div>
  );
}
